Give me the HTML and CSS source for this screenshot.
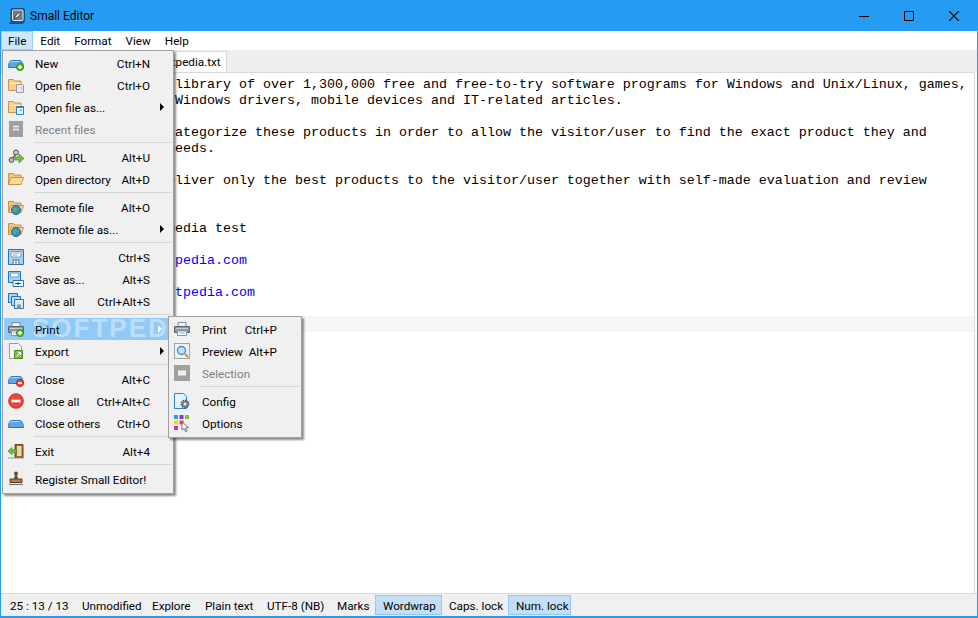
FILE: index.html
```html
<!DOCTYPE html>
<html lang="en">
<head>
<meta charset="utf-8">
<title>Small Editor</title>
<link rel="stylesheet" href="styles.css">
</head>
<body>
<svg class="defs" width="0" height="0" aria-hidden="true">
  <defs>
    <symbol id="tab" viewBox="0 0 16 16"><path d="M.5 12.500C.5 9 1.500 5.500 4 5.500h8c2 0 3 3.500 3.500 7z" fill="#5aa6e6" stroke="#2a78bf"/><path d="M2 8c.5-1 1-1.500 2.500-1.500h7" fill="none" stroke="#b5dbf8"/></symbol>
    <symbol id="plus" viewBox="0 0 16 16"><circle cx="12" cy="12" r="3.600" fill="#59b92f" stroke="#3f8f1d"/><path d="M10 12h4M12 10v4" stroke="#fff" stroke-width="1.300"/></symbol>
    <symbol id="minus" viewBox="0 0 16 16"><circle cx="12" cy="12" r="3.600" fill="#e5483a" stroke="#b92d21"/><path d="M10 12h4" stroke="#fff" stroke-width="1.500"/></symbol>
    <symbol id="folder" viewBox="0 0 16 16"><path d="M.5 13.500v-11h5l1.500 1.500h6v9.500z" fill="#f6d38d" stroke="#c9954a"/><path d="M1.500 6.500h11" stroke="#fdf0cf"/></symbol>
    <symbol id="openfolder" viewBox="0 0 16 16"><path d="M.5 13.500v-11h5l1.500 1.500h6v2" fill="#eec67a" stroke="#c9954a"/><path d="M.5 13.500 3 6.500h12.500l-2.500 7z" fill="#f8dc9c" stroke="#c9954a"/></symbol>
    <symbol id="globe" viewBox="0 0 16 16"><circle cx="8" cy="11" r="4.500" fill="#3b8fd8" stroke="#1c639f"/><path d="M5 9.500c1.500-1.500 3.500-1.500 4 0s-1.500 2-1 4c-1.500 0-3-2-3-4z" fill="#5fb53a"/></symbol>
    <symbol id="floppy" viewBox="0 0 16 16"><path d="M.5.500h15v15H.5z" fill="#a9d2f2" stroke="#1f76bd"/><path d="M3 2.500h10v5.500H3z" fill="#fff" stroke="#5fa0d2"/><path d="M4.500 4h7M4.500 6h5" stroke="#889" stroke-width=".8"/><path d="M5 11h6v4.500H5z" fill="#fff" stroke="#4f6f88"/><path d="M8 12v2.500" stroke="#333"/></symbol>
    <symbol id="printer" viewBox="0 0 16 16"><path d="M4 1.500h8v4H4z" fill="#eef2f5" stroke="#7c8b98"/><path d="M.5 5.500h15v6H.5z" fill="#8e9aa4" stroke="#59656f"/><path d="M2 7.500h12" stroke="#c4ccd2"/><path d="M3.500 10h9v4.500h-9z" fill="#fff" stroke="#6aa0cc"/><path d="M5 12h6" stroke="#8fb7d8"/></symbol>
  </defs>
</svg>

<div class="window">
  <header class="titlebar">
    <svg class="app-icon" viewBox="0 0 16 16" width="16" height="16"><path d="M3 .5h11c1 0 1.500.5 1.500 1.500v10.500c0 1.500-1 3-2.500 3H.5c1-1 1.500-2 1.500-3V2C2 1 2.500.5 3 .5z" fill="#135a9c" stroke="#0f4c86"/><rect x="3.500" y="2" width="10.500" height="10.500" rx="1" fill="#6f7a84" stroke="#e3e8ec"/><path d="M5.500 10.500l1-2.500 3.500-3.500 1.500 1.500-3.500 3.500z" fill="#fff" stroke="#1c1c1c" stroke-width=".7"/></svg>
    <span class="title">Small Editor</span>
    <div class="controls">
      <svg class="ctl" viewBox="0 0 10 10" width="10" height="10"><path d="M0 5.500h10" stroke="#000"/></svg>
      <svg class="ctl" viewBox="0 0 10 10" width="10" height="10"><path d="M.5.500h9v9h-9z" fill="none" stroke="#000"/></svg>
      <svg class="ctl" viewBox="0 0 10 10" width="10" height="10"><path d="M0 0l10 10M10 0L0 10" stroke="#000" stroke-width="1.100"/></svg>
    </div>
  </header>

  <nav class="menubar">
    <span class="mb-item mb-file">File</span>
    <span class="mb-item">Edit</span>
    <span class="mb-item">Format</span>
    <span class="mb-item">View</span>
    <span class="mb-item">Help</span>
  </nav>

  <div class="tabstrip"><span class="tab">softpedia.txt</span></div>

  <main class="editor">
<div class="ln">Softpedia is a large library of over 1,300,000 free and free-to-try software programs for Windows and Unix/Linux, games,</div>
<div class="ln">tools, Mac software, Windows drivers, mobile devices and IT-related articles.</div>
<div class="ln">&nbsp;</div>
<div class="ln">We review and often categorize these products in order to allow the visitor/user to find the exact product they and</div>
<div class="ln">and what their PC's needs.</div>
<div class="ln">&nbsp;</div>
<div class="ln">We strive often to deliver only the best products to the visitor/user together with self-made evaluation and review</div>
<div class="ln">notes.</div>
<div class="ln">&nbsp;</div>
<div class="ln">This is truly a Softpedia test</div>
<div class="ln">&nbsp;</div>
<div class="ln">Link: <span class="url">http://www.softpedia.com</span></div>
<div class="ln">&nbsp;</div>
<div class="ln">Link: <span class="url">https://www.softpedia.com</span></div>
<div class="ln">&nbsp;</div>
<div class="ln current">&nbsp;</div>
  </main>

  <footer class="statusbar">
    <span class="st st-pos">25 : 13 / 13</span>
    <span class="st st-mod">Unmodified</span>
    <span class="st st-exp">Explore</span>
    <span class="st st-type">Plain text</span>
    <span class="st st-enc">UTF-8 (NB)</span>
    <span class="st st-marks">Marks</span>
    <span class="st st-on st-wrap">Wordwrap</span>
    <span class="st st-caps">Caps. lock</span>
    <span class="st st-on st-num">Num. lock</span>
  </footer>

  <div class="menu filemenu">
    <div class="row"><svg class="ic"><use href="#tab"/><use href="#plus"/></svg><span class="lb">New</span><span class="sc">Ctrl+N</span></div>
    <div class="row"><svg class="ic" viewBox="0 0 16 16"><use href="#folder" width="16" height="16"/><path d="M8.500 7.500h6l1 1v7h-7z" fill="#e8e8e8" stroke="#9a9a9a"/><path d="M13 11h1" stroke="#777"/></svg><span class="lb">Open file</span><span class="sc">Ctrl+O</span></div>
    <div class="row"><svg class="ic" viewBox="0 0 16 16"><use href="#folder" width="16" height="16"/><path d="M8.500 7.500h7v8h-7z" fill="#e4f2fc" stroke="#2c85cb"/><path d="M8.500 8h7" stroke="#2c85cb" stroke-width="2"/><path d="M12 11h2" stroke="#2c85cb"/></svg><span class="lb">Open file as...</span><span class="arrow"></span></div>
    <div class="row off"><svg class="ic" viewBox="0 0 16 16"><path d="M1 0h14v16H1z" fill="#a0a0a0"/><path d="M5 5.500h6M5 8.500h6" stroke="#f4f4f4" stroke-width="1.500"/></svg><span class="lb">Recent files</span></div>
    <div class="sep"></div>
    <div class="row"><svg class="ic" viewBox="0 0 16 16"><circle cx="3.500" cy="11" r="2.500" fill="#b7b7b7" stroke="#555"/><circle cx="8" cy="3.500" r="2.500" fill="#c8c8c8" stroke="#555"/><path d="M4.500 9l3-3" stroke="#555" stroke-width="1.500"/><path d="M7 8h4V5l5 4.500-5 4.500v-3H7z" fill="#77c23a" stroke="#4c8a1f" stroke-width=".7"/></svg><span class="lb">Open URL</span><span class="sc">Alt+U</span></div>
    <div class="row"><svg class="ic"><use href="#openfolder"/></svg><span class="lb">Open directory</span><span class="sc">Alt+D</span></div>
    <div class="sep"></div>
    <div class="row"><svg class="ic"><use href="#openfolder"/><use href="#globe"/></svg><span class="lb">Remote file</span><span class="sc">Alt+O</span></div>
    <div class="row"><svg class="ic"><use href="#openfolder"/><use href="#globe"/></svg><span class="lb">Remote file as...</span><span class="arrow"></span></div>
    <div class="sep"></div>
    <div class="row"><svg class="ic"><use href="#floppy"/></svg><span class="lb">Save</span><span class="sc">Ctrl+S</span></div>
    <div class="row"><svg class="ic" viewBox="0 0 16 16"><path d="M.5.500h12v11H.5z" fill="#a9d2f2" stroke="#1f76bd"/><path d="M2.500 2h8v4h-8z" fill="#fff" stroke="#5fa0d2"/><path d="M5 9.500h10.500v6H5z" fill="#fff" stroke="#1f76bd"/><path d="M7 12.500h6M10 11v3" stroke="#444"/></svg><span class="lb">Save as...</span><span class="sc">Alt+S</span></div>
    <div class="row"><svg class="ic" viewBox="0 0 16 16"><path d="M.5.500h9v9h-9z" fill="#a9d2f2" stroke="#1f76bd"/><path d="M3.500 3.500h9v9h-9z" fill="#bcdcf5" stroke="#1f76bd"/><path d="M6.500 6.500h9v9h-9z" fill="#d5eafa" stroke="#1f76bd"/><path d="M9 11.500h4v4H9z" fill="#7f95a6"/><path d="M8.500 8h6" stroke="#fff"/></svg><span class="lb">Save all</span><span class="sc">Ctrl+Alt+S</span></div>
    <div class="sep"></div>
    <div class="row active"><span class="watermark">SOFTPEDIA</span><svg class="ic"><use href="#printer"/><use href="#plus"/></svg><span class="lb">Print</span><span class="arrow arrow-w"></span></div>
    <div class="row"><svg class="ic" viewBox="0 0 16 16"><path d="M1.500.5h9l3 3v12h-12z" fill="#f5f5f5" stroke="#9a9a9a"/><path d="M6.500 7.500h8v8h-8z" fill="#7fc04b" stroke="#4c8a1f"/><path d="M8.500 13.500l4-4M10 9.500h2.500V12" fill="none" stroke="#fff"/></svg><span class="lb">Export</span><span class="arrow"></span></div>
    <div class="sep"></div>
    <div class="row"><svg class="ic"><use href="#tab"/><use href="#minus"/></svg><span class="lb">Close</span><span class="sc">Alt+C</span></div>
    <div class="row"><svg class="ic" viewBox="0 0 16 16"><circle cx="8" cy="8" r="7.300" fill="#e8483a" stroke="#c22f22"/><path d="M3.500 8h9" stroke="#fff" stroke-width="2.600"/></svg><span class="lb">Close all</span><span class="sc">Ctrl+Alt+C</span></div>
    <div class="row"><svg class="ic"><use href="#tab"/></svg><span class="lb">Close others</span><span class="sc">Ctrl+O</span></div>
    <div class="sep"></div>
    <div class="row"><svg class="ic" viewBox="0 0 16 16"><path d="M7 1.500h8v13H7z" fill="#a5692c" stroke="#6e4215"/><path d="M9 3h4.500v10H9z" fill="#e8d9b0"/><path d="M0 8l4-3.500V7h5v2.500H4V12z" fill="#6fbe38" stroke="#3f8f1d" stroke-width=".7"/><path d="M0 15h16" stroke="#999"/></svg><span class="lb">Exit</span><span class="sc">Alt+4</span></div>
    <div class="sep"></div>
    <div class="row"><svg class="ic" viewBox="0 0 16 16"><circle cx="8" cy="2.500" r="2" fill="#6b4a2d"/><path d="M7 4h2l1 4H6z" fill="#6b4a2d"/><path d="M2 8h12v3.500H2z" fill="#a97c4f" stroke="#5f3f20"/><path d="M1 13.500c1-1 2 1 3 0s2 1 3 0 2 1 3 0 2 1 3 0 1.500.5 2 .5" fill="none" stroke="#444"/></svg><span class="lb">Register Small Editor!</span></div>
  </div>

  <div class="menu submenu">
    <div class="row"><svg class="ic"><use href="#printer"/></svg><span class="lb">Print</span><span class="sc">Ctrl+P</span></div>
    <div class="row"><svg class="ic" viewBox="0 0 16 16"><path d="M.5.500h15v15H.5z" fill="none" stroke="#555" stroke-dasharray="1 1"/><circle cx="7.500" cy="7.500" r="4" fill="#bfe0f6" stroke="#4a90c4" stroke-width="1.400"/><path d="M11 11l3 3" stroke="#d08a2c" stroke-width="2"/></svg><span class="lb">Preview</span><span class="sc">Alt+P</span></div>
    <div class="row off"><svg class="ic" viewBox="0 0 16 16"><path d="M0 0h16v16H0z" fill="#a0a0a0"/><path d="M4 5.500h8v5H4z" fill="#f0f0f0"/></svg><span class="lb">Selection</span></div>
    <div class="sep"></div>
    <div class="row"><svg class="ic" viewBox="0 0 16 16"><path d="M.5.500h9l3 3v12H.5z" fill="#e4f2fc" stroke="#2c85cb"/><circle cx="11" cy="11" r="3.500" fill="#8d979f" stroke="#555" stroke-width="1.800" stroke-dasharray="1.500 .8"/><circle cx="11" cy="11" r="1.200" fill="#eee"/></svg><span class="lb">Config</span></div>
    <div class="row"><svg class="ic" viewBox="0 0 16 16"><path d="M0 0h4v4H0z" fill="#2b9de8"/><path d="M5.500 0h4v4h-4z" fill="#7b3fd0"/><path d="M11 0h4v4h-4z" fill="#7cc52d"/><path d="M0 5.500h4v4H0z" fill="#f5d21f"/><path d="M5.500 5.500h4v4h-4z" fill="#e8483a"/><path d="M0 11h4v4H0z" fill="#d42bd0"/><path d="M8 7l6.500 5.500-3 .5 1.500 3-1.500.5-1.500-3L8 15z" fill="#fff" stroke="#555" stroke-width=".8"/></svg><span class="lb">Options</span></div>
  </div>
</div>
</body>
</html>
```
FILE: styles.css
```css
* { box-sizing: border-box; }
html, body { margin: 0; padding: 0; }
body { width: 978px; height: 618px; overflow: hidden; font-family: "Roboto", "Liberation Sans", sans-serif; font-size: 11.7px; color: #000; }
.defs { position: absolute; }
.window { position: relative; width: 978px; height: 618px; display: flex; flex-direction: column; background: #fff; border: 1px solid #259cf1; border-width: 0 1px 2px; overflow: hidden; }

.titlebar { height: 31px; flex: none; margin: 0 -1px; padding-left: 9px; display: flex; align-items: center; background: #259cf1; }
.app-icon { flex: none; }
.title { margin-left: 5px; padding-top: 1px; font-size: 12px; }
.controls { margin-left: auto; display: flex; height: 31px; align-items: center; }
.ctl { flex: none; margin-right: 35.500px; }
.ctl:last-child { margin-right: 19px; }
.controls .ctl:first-child { margin-right: 35px; }

.menubar { height: 19px; flex: none; display: flex; align-items: stretch; background: #fff; }
.mb-item { padding: 1px 6px 0; display: flex; align-items: center; border: 1px solid transparent; }
.mb-file { background: #cce8ff; border-color: #99d1ff; }

.tabstrip { height: 22px; flex: none; display: flex; align-items: flex-end; background: #efefef; }
.tab { width: 226px; height: 21px; padding-left: 153px; background: #fff; border: 1px solid #d9d9d9; border-bottom: 0; line-height: 21px; white-space: nowrap; }

.editor { flex: 1; min-height: 0; padding: 3px 0 0 6px; margin-right: 2px; border-top: 1px solid #d9d9d9; border-right: 1px solid #d9d9d9; font-family: "Liberation Mono", monospace; font-size: 13.333px; line-height: 16px; background: #fff; white-space: nowrap; overflow: hidden; }
.ln { height: 16px; padding-top: 1px; }
.current { background: #f6f6f6; margin-left: -6px; }
.url { color: #0000ff; }

.statusbar { height: 23px; flex: none; display: flex; align-items: center; padding: 1px 0 1px 1px; background: #f0f0f0; border-top: 1px solid #dadada; }
.st { flex: none; display: flex; align-items: center; height: 20px; padding: 2px 0 0 7px; border: 1px solid transparent; white-space: nowrap; }
.st-on { background: #c4dff5; border-color: #92c9f5; }
.st-pos { width: 72px; }
.st-mod { width: 70px; }
.st-exp { width: 53px; }
.st-type { width: 62px; }
.st-enc { width: 70px; }
.st-marks { width: 46px; }
.st-wrap { width: 67px; }
.st-caps { width: 66px; padding-left: 6px; }
.st-num { width: 63px; }

.menu { position: absolute; background: #f0f0f0; border: 1px solid #a0a0a0; box-shadow: 2px 2px 2px rgba(0,0,0,.45); padding: 1px 0; }
.filemenu { left: 1px; top: 50px; width: 172px; height: 444px; z-index: 2; }
.submenu { left: 167px; top: 316px; width: 134px; height: 122px; z-index: 3; }
.row { height: 22px; display: flex; align-items: center; position: relative; padding-right: 23px; white-space: nowrap; }
.submenu .row { padding-right: 24px; }
.ic { width: 16px; height: 16px; flex: none; margin-left: 5px; overflow: visible; position: relative; }
.lb { margin-left: 11px; padding-top: 1px; position: relative; }
.submenu .lb { margin-left: 12px; }
.sc { margin-left: auto; padding-top: 1px; }
.off .lb { color: #808080; }
.active { background: #91c9f7; margin-left: 1px; margin-right: 2px; }
.active .ic { margin-left: 4px; }
.sep { height: 1px; margin: 2px 2px 3px 31px; background: #d5d5d5; }
.arrow { margin-left: auto; margin-right: -14px; width: 0; height: 0; border-left: 4px solid #000; border-top: 4px solid transparent; border-bottom: 4px solid transparent; position: relative; }
.arrow-w { border-left-color: #fff; }
.watermark { position: absolute; left: 28px; top: -5px; font-family: "Liberation Sans", sans-serif; font-weight: 700; font-size: 26px; letter-spacing: 2px; line-height: 30px; color: rgba(255,255,255,.42); pointer-events: none; }
```
